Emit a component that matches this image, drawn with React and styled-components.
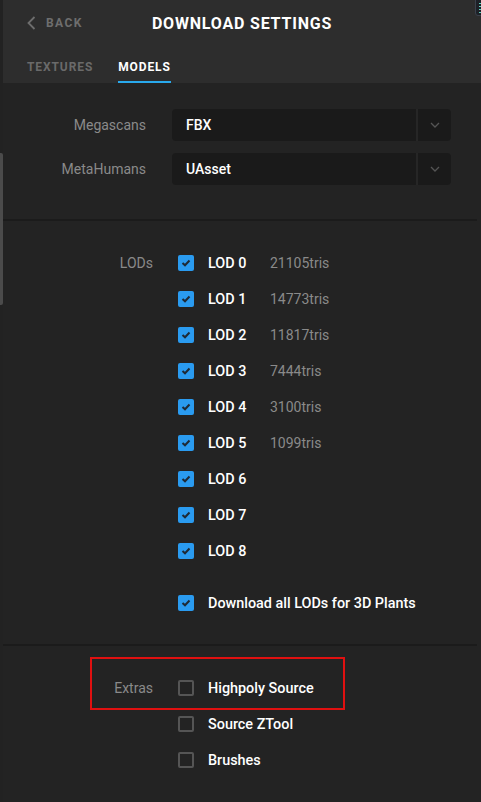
import React from "react";
import styled, { createGlobalStyle } from "styled-components";

const GlobalStyle = createGlobalStyle`
  html, body {
    margin: 0;
    padding: 0;
    background: #232323;
  }
  body {
    font-family: Roboto, "Liberation Sans", Arial, sans-serif;
  }
`;

const Page = styled.div`
  position: relative;
  min-height: 802px;
  background: #232323;
  border-left: 3px solid #222222;
  box-sizing: border-box;
`;

const ScrollThumb = styled.div`
  position: absolute;
  left: -3px;
  top: 153px;
  width: 3px;
  height: 152px;
  border-radius: 0 2px 2px 0;
  background: #4b4b4b;
`;

const CornerWidget = styled.div`
  position: absolute;
  right: -4px;
  top: -3px;
  width: 10px;
  height: 19px;
  border-radius: 3px;
  background: #1d2127;
  border: 1px solid #3b414c;
  display: flex;
  flex-direction: column;
  gap: 2px;
  padding: 5px 0 0 3px;
  box-sizing: border-box;

  span {
    display: block;
    height: 1px;
    width: 6px;
    background: #5fd3c0;
  }
`;

const Header = styled.header`
  background: #2d2d2d;
`;

const TopBar = styled.div`
  display: grid;
  grid-template-columns: 1fr auto 1fr;
  align-items: center;
  height: 46px;
`;

const BackButton = styled.button`
  justify-self: start;
  display: flex;
  align-items: center;
  gap: 10px;
  margin-left: 24px;
  padding: 0;
  border: none;
  background: none;
  color: #6e6e6e;
  font-family: inherit;
  font-size: 12px;
  font-weight: 700;
  letter-spacing: 1.4px;
  cursor: pointer;
`;

const Title = styled.h1`
  margin: 0;
  color: #ffffff;
  font-size: 16px;
  font-weight: 700;
  letter-spacing: 0.8px;
`;

const Tabs = styled.nav`
  display: flex;
  gap: 25px;
  padding-left: 24px;
`;

const Tab = styled.div`
  padding: 14px 0 7px;
  font-size: 12px;
  line-height: 14px;
  font-weight: 700;
  letter-spacing: 0.9px;
  color: ${(p) => (p.$active ? "#ffffff" : "#6a6a6a")};
  border-bottom: 2px solid ${(p) => (p.$active ? "#29a9ec" : "transparent")};
`;

const Section = styled.section`
  display: flex;
  flex-direction: column;
  gap: ${(p) => p.$gap || 0}px;
  padding: ${(p) => p.$pad};
  margin-right: 4px;
  border-bottom: ${(p) => (p.$divider ? "2px solid #1b1b1b" : "none")};
`;

const FieldRow = styled.div`
  display: grid;
  grid-template-columns: 143px 1fr;
  column-gap: 26px;
  align-items: center;
  padding-right: 26px;
`;

const Label = styled.div`
  text-align: right;
  font-size: 14px;
  color: #8a8a8a;
`;

const Select = styled.div`
  display: flex;
  height: 32px;
  border-radius: 4px;
  background: #1a1a1a;
  overflow: hidden;
`;

const SelectValue = styled.div`
  flex: 1;
  display: flex;
  align-items: center;
  padding-left: 14px;
  font-size: 14px;
  font-weight: 500;
  color: #ffffff;
`;

const SelectArrow = styled.div`
  width: 33px;
  display: flex;
  align-items: center;
  justify-content: center;
  border-left: 2px solid #262626;
`;

const CheckRow = styled.div`
  position: relative;
  display: grid;
  grid-template-columns: 175px 16px 76px auto;
  align-items: center;
  height: 36px;
  margin-top: ${(p) => p.$offset || 0}px;
`;

const RowLabel = styled(Label)`
  padding-right: 25px;
`;

const Box = styled.span`
  grid-column: 2;
  width: 16px;
  height: 16px;
  box-sizing: border-box;
  border-radius: 2px;
  display: flex;
  align-items: center;
  justify-content: center;
  background: ${(p) => (p.$checked ? "#2a9bf0" : "transparent")};
  border: ${(p) => (p.$checked ? "none" : "2px solid #555555")};
`;

const Name = styled.span`
  grid-column: ${(p) => (p.$wide ? "3 / span 2" : "3")};
  padding-left: 14px;
  font-size: 14.4px;
  font-weight: 500;
  color: #ffffff;
  white-space: nowrap;
`;

const Tris = styled.span`
  font-size: 14px;
  color: #8a8a8a;
`;

const Highlight = styled.div`
  position: absolute;
  left: 87px;
  top: -13px;
  width: 255px;
  height: 53px;
  box-sizing: border-box;
  border: 2px solid #e01010;
  pointer-events: none;
`;

const Chevron = ({ dir }) =>
  dir === "left" ? (
    <svg width="9" height="14" viewBox="0 0 9 14">
      <polyline points="7.5,1 1.5,7 7.5,13" fill="none" stroke="#6e6e6e" strokeWidth="1.8" />
    </svg>
  ) : (
    <svg width="10" height="6" viewBox="0 0 10 6">
      <polyline points="1,1 5,5 9,1" fill="none" stroke="#555555" strokeWidth="1.3" />
    </svg>
  );

const Check = () => (
  <svg width="10" height="8" viewBox="0 0 10 8">
    <polyline points="1.5,4 4,6.3 8.5,1.5" fill="none" stroke="#1e2a36" strokeWidth="2" />
  </svg>
);

const Checkbox = ({ checked }) => <Box $checked={checked}>{checked ? <Check /> : null}</Box>;

const lods = [
  ["LOD 0", "21105tris"],
  ["LOD 1", "14773tris"],
  ["LOD 2", "11817tris"],
  ["LOD 3", "7444tris"],
  ["LOD 4", "3100tris"],
  ["LOD 5", "1099tris"],
  ["LOD 6", ""],
  ["LOD 7", ""],
  ["LOD 8", ""],
];

const extras = ["Highpoly Source", "Source ZTool", "Brushes"];

const App = () => (
  <>
    <GlobalStyle />
    <Page>
      <ScrollThumb />
      <CornerWidget>
        <span />
        <span />
        <span />
        <span />
      </CornerWidget>

      <Header>
        <TopBar>
          <BackButton>
            <Chevron dir="left" />
            BACK
          </BackButton>
          <Title>DOWNLOAD SETTINGS</Title>
          <div />
        </TopBar>
        <Tabs>
          <Tab>TEXTURES</Tab>
          <Tab $active>MODELS</Tab>
        </Tabs>
      </Header>

      <Section $pad="26px 0 34px" $gap={12} $divider>
        <FieldRow>
          <Label>Megascans</Label>
          <Select>
            <SelectValue>FBX</SelectValue>
            <SelectArrow>
              <Chevron dir="down" />
            </SelectArrow>
          </Select>
        </FieldRow>
        <FieldRow>
          <Label>MetaHumans</Label>
          <Select>
            <SelectValue>UAsset</SelectValue>
            <SelectArrow>
              <Chevron dir="down" />
            </SelectArrow>
          </Select>
        </FieldRow>
      </Section>

      <Section $pad="24px 0 23px" $divider>
        {lods.map(([name, tris], i) => (
          <CheckRow key={name}>
            <RowLabel>{i === 0 ? "LODs" : ""}</RowLabel>
            <Checkbox checked />
            <Name>{name}</Name>
            <Tris>{tris}</Tris>
          </CheckRow>
        ))}
        <CheckRow $offset={16}>
          <RowLabel />
          <Checkbox checked />
          <Name $wide>Download all LODs for 3D Plants</Name>
        </CheckRow>
      </Section>

      <Section $pad="24px 0 40px">
        {extras.map((name, i) => (
          <CheckRow key={name}>
            <RowLabel>{i === 0 ? "Extras" : ""}</RowLabel>
            <Checkbox />
            <Name $wide>{name}</Name>
            {i === 0 ? <Highlight /> : null}
          </CheckRow>
        ))}
      </Section>
    </Page>
  </>
);

export default App;
